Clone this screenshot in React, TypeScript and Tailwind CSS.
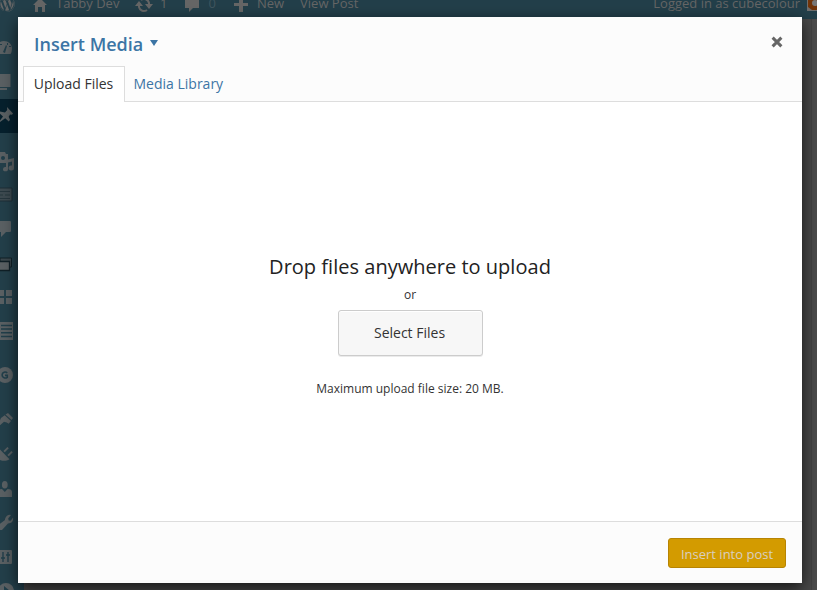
import type { ReactNode } from "react";
import { FaWordpress } from "react-icons/fa";

type Glyph = { id: string; y: number; art: ReactNode };

const menu: Glyph[] = [
  { id: "dashboard", y: 41, art: <><path d="M-4 13V7A8 7 0 0 1 12 7c0 3-.6 5-1.5 6z" /><path d="m3 11 3-7 1 1-2 7zM7 2h1v2H7zM9 5h2v1H9zM0 3h2v1H0z" fill="#213e4a" /></> },
  { id: "posts", y: 74, art: <path d="M0 0h10.5v13H0zM0 14h7v2H0z" /> },
  { id: "pin", y: 107, art: <path d="M7 0l6 6.5-1 1.3-2-.3-1.3 2.3 1.3 3-1.2 1.7-3.6-3.2L0 15v-1.6l3-4L-1 6l1-1.5 5 .9L7.2 3z" /> },
  { id: "media", y: 152, art: <><path d="M0 0h5l1 2h2v9H0z" /><path d="M6 8l8-2v10a2.7 2.5 0 1 1-2-2.4V9.4l-4 1V17a2.5 2.2 0 1 1-2-2z" /><circle cx="3" cy="6" r="2" fill="#213e4a" /></> },
  { id: "form", y: 187, art: <><path d="M-1 1h13v13H-1z" fill="#3d4a50" stroke="#1f2f36" /><path d="M0 4.5h10M0 8h3M0 11.5h10M5 8h5" stroke="#26363d" strokeWidth="1.2" /></> },
  { id: "comments", y: 221, art: <path d="M-1 0h11q1 0 1 1v9q0 1-1 1H6l-5 5v-5h-2z" /> },
  { id: "slides", y: 257, art: <><path d="M0 1h11.5v9H0z" fill="#3b474d" stroke="#102027" /><path d="M-1 4.5H9.5v9H-1z" stroke="#102027" strokeWidth="1.3" /></> },
  { id: "grid", y: 290, art: <path d="M-1 0h5v6h-5zM6 0h6v6H6zM-1 8h5v6h-5zM6 8h6v6H6z" /> },
  { id: "list", y: 322, art: <><path d="M-1 0h14v18H-1z" /><path d="M1 3.5h11M1 7h11M1 10.8h11M1 14.5h11" stroke="#213e4a" strokeWidth="1.6" /></> },
  { id: "g", y: 367, art: <><circle cx="5" cy="8" r="8" /><path d="M7.3 5.8C5.5 4.3 2.1 5 2.1 8s3.4 3.7 5.2 2.3V8.4H5" fill="none" stroke="#213e4a" strokeWidth="1.6" /></> },
  { id: "brush", y: 412, art: <><path d="M5.5 2.5 8 1l5 5-1.5 2z" /><path d="M4.7 3.3 11 9l-2.3 2.7-2-1.2L4 9.8-1 14v-3.5L1 6z" /></> },
  { id: "plug", y: 447, art: <path d="m0 2.5 9.5 9.8c-3.5 2-6.5 2-10.5.3V4zM3.4 4l4-4 1.4 1.3-4 4zM7.4 8l4-4 1.4 1.3-4 4z" /> },
  { id: "user", y: 481, art: <><ellipse cx="4.8" cy="3.8" rx="2.9" ry="3.8" /><path d="M-3 16v-5q1-3 5-3l2.8 3 2.8-3q4.4 0 4.4 3v5z" /></> },
  { id: "wrench", y: 515, art: <path d="M5 4q2-5 6-4L8.2 3.5l.5 2 2 .2L13 2.5q1 5.5-5 6L2 15H-1V9.5L5 5z" /> },
  { id: "sliders", y: 550, art: <><path d="M-1 0h12q1 0 1 1v12q0 1-1 1H-1z" /><path d="M3 2v10M8 2v10M1 8h4M6 5h4" stroke="#213e4a" strokeWidth="1.4" /></> },
  { id: "collapse", y: 583, art: <><circle cx="6" cy="8" r="8" /><path d="m4 3 6 5H4z" fill="#213e4a" /></> },
];

function AdminBar() {
  return (
    <header className="relative h-[19px] overflow-hidden bg-[#233f4a] text-[13px] leading-[18px] text-[#666666]">
      <div className="relative -top-[6px] flex h-[18px] items-center whitespace-nowrap">
        <FaWordpress className="-ml-[1px] mt-[1px] h-4 w-4 shrink-0" />
        <svg className="ml-[18px] mt-1 h-[14px] w-[14px]" viewBox="0 0 14 14" fill="currentColor"><path d="m7 0 7 7H0zM2 7h10v7H9v-5H5v5H2z" /></svg>
        <span className="ml-[9px] w-[64px]">Tabby Dev</span>
        <svg className="ml-[15px] mt-1 h-4 w-[18px]" viewBox="0 0 18 16" fill="none" stroke="currentColor" strokeWidth="2"><path d="M14 9V6a5 5 0 0 0-8-3M4 7v3a5 5 0 0 0 8 3" /><path d="M10 7h8l-4 5zM0 9h8L4 4z" fill="currentColor" stroke="none" /></svg>
        <span className="ml-[7px]">1</span>
        <svg className="ml-[18px] mt-1 h-[14px] w-[14px]" viewBox="0 0 14 14" fill="currentColor"><path d="M0 0h14v10H8l-4 4v-4H0z" /></svg>
        <span className="ml-[9px] text-[#40565f]">0</span>
        <svg className="ml-[18px] mt-1 h-[14px] w-[14px]" viewBox="0 0 14 14" fill="currentColor"><path d="M5 0h4v5h5v3H9v6H5V8H0V5h5z" /></svg>
        <span className="ml-[9px]">New</span>
        <span className="ml-4">View Post</span>
        <span className="ml-auto mr-[17px]">Logged in as cubecolour</span>
      </div>
      <svg className="absolute right-0 top-0 h-[11px] w-[10px]" viewBox="0 0 10 11"><path d="M0 0h10v11H0z" fill="#6e6e6e" /><path d="M1 0h9v10H5L1 7z" fill="#713409" /><circle cx="8" cy="3" r="3" fill="#777" /></svg>
    </header>
  );
}

function Sidebar() {
  return (
    <aside className="w-6 shrink-0 bg-[#233f4a]">
      <svg className="h-[571px] w-6" viewBox="0 19 24 571" fill="#5a6063">
        <rect y="99" width="24" height="34" fill="#06202d" />
        {menu.map((item) => <g key={item.id} transform={"translate(0 " + item.y + ")"}>{item.art}</g>)}
      </svg>
    </aside>
  );
}

export default function App() {
  return (
    <div className="relative h-[590px] w-[817px] overflow-hidden bg-[#484848] font-['Open_Sans',sans-serif]">
      <AdminBar />
      <div className="flex h-[571px]">
        <Sidebar />
        <div className="ml-auto w-[6px] border-l border-[#424242] bg-[#4b4b4b]" />
      </div>
      <section role="dialog" className="absolute left-[18px] top-[17px] flex h-[566px] w-[784px] flex-col bg-white shadow-[0_5px_15px_rgba(0,0,0,0.7)]">
        <div className="h-[85px] shrink-0 border-b border-[#dddddd] bg-[#fcfcfc]">
          <div className="flex h-[49px] items-start justify-between pl-4 pr-[19px]">
            <h1 className="mt-[14px] flex items-center text-[18px] font-semibold leading-[27px] text-[#3c75a5]">
              <span className="w-[109px] whitespace-nowrap">Insert Media</span>
              <svg className="-mt-[3px] ml-[7px] h-[6px] w-[8px]" viewBox="0 0 8 6" fill="currentColor"><path d="M0 0h8L4 6z" /></svg>
            </h1>
            <button aria-label="Close" className="mt-[19px]"><svg className="h-[12px] w-[12px]" viewBox="0 0 12 12" fill="none" stroke="#666" strokeWidth="3"><path d="m1.6 1.6 8.8 8.8m0-8.8L1.6 10.4" /></svg></button>
          </div>
          <nav className="flex h-9 pl-[5px] text-[14px] leading-[18px]">
            <button className="h-9 w-[102px] border border-b-0 border-[#dddddd] bg-white pb-[1px] pr-[1px] text-[#333]">Upload Files</button>
            <button className="ml-[8.5px] h-9 pb-[1px] text-[#3c75a5]">Media Library</button>
          </nav>
        </div>
        <main className="flex flex-1 flex-col items-center text-[#333]">
          <h2 className="mt-[151px] text-[20px] leading-[28px] tracking-[0.02px] text-[#222]">Drop files anywhere to upload</h2>
          <p className="mt-[5px] text-[12px] leading-[18px]">or</p>
          <button className="mt-[6px] h-[46px] w-[145px] rounded-[3px] border border-[#cccccc] bg-[#f7f7f7] pb-[2px] pr-[1px] text-[14px] text-[#333] shadow-[inset_0_1px_0_#fff,0_1px_0_rgba(0,0,0,0.08)]">Select Files</button>
          <p className="mt-[24px] text-[12px] leading-[18px]">Maximum upload file size: 20 MB.</p>
        </main>
        <footer className="flex h-[62px] shrink-0 items-center justify-end border-t border-[#dddddd] bg-[#fcfcfc] pr-4">
          <button className="h-[30px] w-[118px] rounded-[3px] border border-[#b78403] bg-[#d39b00] pt-[3px] text-[13px] leading-[18px] text-[#d8cfc0]">Insert into post</button>
        </footer>
      </section>
    </div>
  );
}
